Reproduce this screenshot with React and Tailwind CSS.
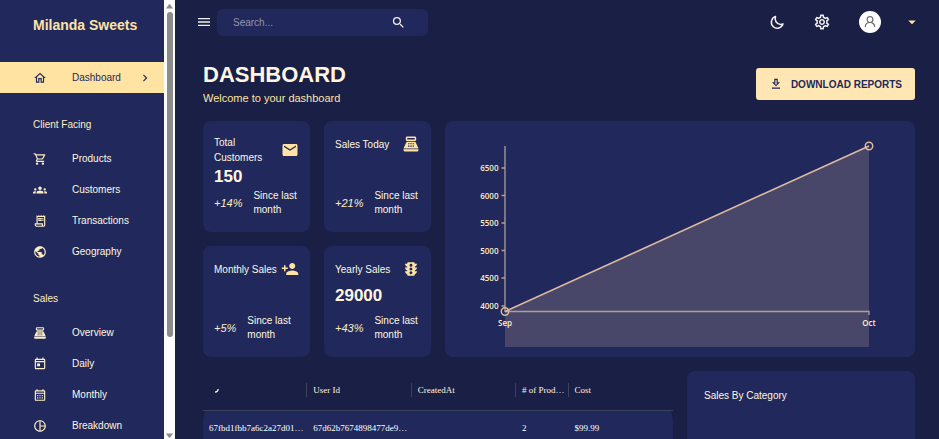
import {
  MdOutlineHome,
  MdChevronRight,
  MdOutlineShoppingCart,
  MdGroups,
  MdOutlineReceiptLong,
  MdPublic,
  MdPointOfSale,
  MdOutlineToday,
  MdOutlineCalendarMonth,
  MdOutlinePieChartOutline,
  MdMenu,
  MdSearch,
  MdOutlineSettings,
  MdArrowDropDown,
  MdOutlineDownload,
  MdEmail,
  MdPersonAdd,
  MdTraffic,
} from "react-icons/md";

const sections = [
  {
    title: "Client Facing",
    items: [
      { label: "Products", Icon: MdOutlineShoppingCart },
      { label: "Customers", Icon: MdGroups },
      { label: "Transactions", Icon: MdOutlineReceiptLong },
      { label: "Geography", Icon: MdPublic },
    ],
  },
  {
    title: "Sales",
    items: [
      { label: "Overview", Icon: MdPointOfSale },
      { label: "Daily", Icon: MdOutlineToday },
      { label: "Monthly", Icon: MdOutlineCalendarMonth },
      { label: "Breakdown", Icon: MdOutlinePieChartOutline },
    ],
  },
];

function NavItem({ label, Icon, active }) {
  return (
    <a
      href="#"
      className={
        active
          ? "flex h-[31px] items-center bg-[#ffe3a3] pr-3 pl-[33px] text-[#21295c]"
          : "flex h-[31px] items-center pr-3 pl-[33px] text-[#fff6e0]"
      }
    >
      <Icon className={active ? "size-[14px] text-[#21295c]" : "size-[14px] text-[#ffedc2]"} />
      <span className="ml-[25px] flex-1">{label}</span>
      {active && <MdChevronRight className="size-[14px]" />}
    </a>
  );
}

function Sidebar() {
  return (
    <aside className="flex h-screen w-[175px] shrink-0 overflow-hidden bg-[#21295c]">
      <div className="min-w-0 flex-1 text-[10px]">
        <div className="flex h-[62px] items-start pt-[15px] pl-[33px] text-sm font-bold whitespace-nowrap text-[#ffe3a3]">
          Milanda Sweets
        </div>
        <nav>
          <NavItem label="Dashboard" Icon={MdOutlineHome} active />
          {sections.map((s) => (
            <div key={s.title}>
              <h2 className="flex h-[50px] items-center pt-3 pl-[33px] text-[#ffedc2]">{s.title}</h2>
              {s.items.map((i) => (
                <NavItem key={i.label} {...i} />
              ))}
            </div>
          ))}
        </nav>
      </div>
      <div className="flex w-[11px] flex-col items-center bg-[#fcfcfc]">
        <svg viewBox="0 0 7 5" className="mt-1 mb-[3px] h-[5px] w-[7px]">
          <path d="M0 4.5 L3 0.3 h1 L7 4.5z" fill="#8b8b8b" />
        </svg>
        <div className="flex w-[6px] flex-1 flex-col">
          <div className="h-[78%] rounded-full bg-[#8b8b8b]" />
        </div>
        <svg viewBox="0 0 7 5" className="mt-1 mb-px h-[5px] w-[7px]">
          <path d="M0 0.5 L3 4.7 h1 L7 0.5z" fill="#8b8b8b" />
        </svg>
      </div>
    </aside>
  );
}

function Navbar() {
  return (
    <header className="flex h-11 items-center justify-between pr-[18px] pl-[21px] text-[#f0f0f0]">
      <div className="flex items-center gap-[5px]">
        <button aria-label="Menu">
          <MdMenu className="block size-4" />
        </button>
        <div className="flex h-[27px] w-[211px] items-center justify-between rounded-md bg-[#21295c] pr-[22px] pl-4">
          <input
            aria-label="Search"
            placeholder="Search..."
            className="w-[120px] bg-transparent text-[10px] outline-none placeholder:text-[#9295ae]"
          />
          <button aria-label="Submit search">
            <MdSearch className="block size-[15px]" />
          </button>
        </div>
      </div>
      <div className="flex items-center gap-7">
        <button aria-label="Dark mode">
          <svg viewBox="0 0 24 24" className="block size-4" fill="none" stroke="currentColor" strokeWidth="2.3" strokeLinejoin="round">
            <path d="M9.8 3.8A8.9 8.9 0 1 0 21 14.8c-1.2.6-2.4.8-3.6.8A8.6 8.6 0 0 1 9.8 3.8z" />
          </svg>
        </button>
        <button aria-label="Settings">
          <MdOutlineSettings className="block size-[18px]" />
        </button>
        <button aria-label="Account" className="flex items-center gap-[22px]">
          <svg viewBox="0 0 22 22" className="size-[22px]" fill="none" stroke="#6d6d6d" strokeWidth="1.2">
            <circle cx="11" cy="11" r="11" fill="#fff" stroke="none" />
            <circle cx="11" cy="8.6" r="2.9" />
            <path d="M6.3 16c0-2.8 2-4.5 4.7-4.5s4.7 1.7 4.7 4.5" />
          </svg>
          <MdArrowDropDown className="size-[18px] text-[#ffe3a3]" />
        </button>
      </div>
    </header>
  );
}

function StatBox({ title, value, increase, Icon }) {
  return (
    <section className="flex h-[111px] flex-col justify-between rounded-lg bg-[#21295c] px-[11px] pt-[14px] pb-[15px] text-[10px] text-[#fff6e0]">
      <div className="flex items-center justify-between">
        <h2 className="leading-[15px]">{title}</h2>
        <Icon className="size-[18px] shrink-0 text-[#ffe3a3]" />
      </div>
      <p className="h-5 text-[17px] leading-5 font-bold">{value}</p>
      <div className="flex items-center gap-[11px]">
        <span className="text-[11px] text-[#ffedc2] italic">{increase}</span>
        <span className="leading-[14px]">
          Since last
          <br />
          month
        </span>
      </div>
    </section>
  );
}

const ticks = [
  [6500, 47],
  [6000, 74.5],
  [5500, 102],
  [5000, 129.5],
  [4500, 157],
  [4000, 185],
];

function OverviewChart() {
  return (
    <section className="col-span-8 row-span-2 overflow-hidden rounded-lg bg-[#21295c]">
      <svg
        viewBox="0 0 470 236"
        className="block h-full w-full font-['Open_Sans',sans-serif] text-[8px] font-semibold"
        fill="#ffedc2"
        role="img"
        aria-label="Sales from September to October"
      >
        <path d="M60 190.5 L424 25 V226 H60z" fill="#e8c1a0" fillOpacity="0.2" />
        <g stroke="#aba193" strokeWidth="1.3">
          <path d="M60 25 V190.5 H424 V194" fill="none" />
          {ticks.map(([v, y]) => (
            <path key={v} d={`M56.5 ${y} H60`} />
          ))}
        </g>
        <path d="M60 190.5 L424 25" stroke="#dfb9a0" strokeWidth="1.6" />
        <g fill="none" stroke="#dfb9a0" strokeWidth="1.5">
          <circle cx="60" cy="190.5" r="3.7" />
          <circle cx="424" cy="25" r="3.7" />
        </g>
        {ticks.map(([v, y]) => (
          <text key={v} x="53.5" y={y + 3} textAnchor="end">
            {v}
          </text>
        ))}
        <text x="60" y="205" textAnchor="middle">
          Sep
        </text>
        <text x="424" y="205" textAnchor="middle">
          Oct
        </text>
      </svg>
    </section>
  );
}

const separator = <span className="absolute top-3 right-0 h-[14px] w-px bg-[#3d4159]" />;

function OrdersTable() {
  return (
    <section className="col-span-8">
      <table className="w-full table-fixed border-separate border-spacing-0 text-left font-['Liberation_Serif',serif] text-[9px] whitespace-nowrap text-[#fff6e0]">
        <colgroup>
          <col className="w-[22.2%]" />
          <col className="w-[22.2%]" />
          <col className="w-[22.2%]" />
          <col className="w-[11.2%]" />
          <col className="w-[22.2%]" />
        </colgroup>
        <thead>
          <tr className="h-10">
            <th aria-label="ID" className="relative border-b border-[#3a3f5c] pl-3">
              <svg viewBox="0 0 4 4" className="size-1" fill="none" stroke="#fff6e0" strokeWidth="1.2">
                <path d="M0 3.2 Q3 3 3.2 0" />
              </svg>
              {separator}
            </th>
            <th className="relative border-b border-[#3a3f5c] px-[6px] font-medium">User Id{separator}</th>
            <th className="relative border-b border-[#3a3f5c] px-[6px] font-medium">CreatedAt{separator}</th>
            <th className="relative border-b border-[#3a3f5c] px-[6px] font-medium"># of Prod…{separator}</th>
            <th className="border-b border-[#3a3f5c] px-[6px] font-medium">Cost</th>
          </tr>
        </thead>
        <tbody>
          <tr className="h-9 text-white">
            <td className="[border-radius:3px_0_0_0/16px_0_0_0] bg-[#21295c] px-[6px]">67fbd1fbb7a6c2a27d01…</td>
            <td className="bg-[#21295c] px-[6px]">67d62b7674898477de9…</td>
            <td className="bg-[#21295c] px-[6px]" />
            <td className="bg-[#21295c] px-[6px]">2</td>
            <td className="[border-radius:0_3px_0_0/0_16px_0_0] bg-[#21295c] px-[6px]">$99.99</td>
          </tr>
        </tbody>
      </table>
    </section>
  );
}

export default function App() {
  return (
    <div className="flex h-screen overflow-hidden bg-[#191f45] font-['Liberation_Sans',Arial,sans-serif]">
      <Sidebar />
      <div className="min-w-0 flex-1">
        <Navbar />
        <main className="pt-[18px] pr-6 pl-7">
          <div className="flex items-center justify-between">
            <div>
              <h1 className="mb-[2px] text-[22px] leading-[26px] font-bold text-[#fff6e0]">DASHBOARD</h1>
              <p className="text-[11px] leading-4 text-[#ffe3a3]">Welcome to your dashboard</p>
            </div>
            <button className="flex h-8 items-center gap-2 rounded-[3px] bg-[#ffe6b3] px-[13px] text-[10px] font-bold text-[#21295c]">
              <MdOutlineDownload className="size-[14px]" />
              DOWNLOAD REPORTS
            </button>
          </div>
          <div className="mt-[15px] grid grid-cols-12 gap-[14px]">
            <div className="col-span-2">
              <StatBox title="Total Customers" value="150" increase="+14%" Icon={MdEmail} />
            </div>
            <div className="col-span-2">
              <StatBox title="Sales Today" increase="+21%" Icon={MdPointOfSale} />
            </div>
            <OverviewChart />
            <div className="col-span-2">
              <StatBox title="Monthly Sales" increase="+5%" Icon={MdPersonAdd} />
            </div>
            <div className="col-span-2">
              <StatBox title="Yearly Sales" value="29000" increase="+43%" Icon={MdTraffic} />
            </div>
            <OrdersTable />
            <section className="col-span-4 h-[222px] rounded-lg bg-[#21295c] px-[17px] pt-[17px]">
              <h2 className="text-[10px] leading-[15px] text-[#fff6e0]">Sales By Category</h2>
            </section>
          </div>
        </main>
      </div>
    </div>
  );
}
